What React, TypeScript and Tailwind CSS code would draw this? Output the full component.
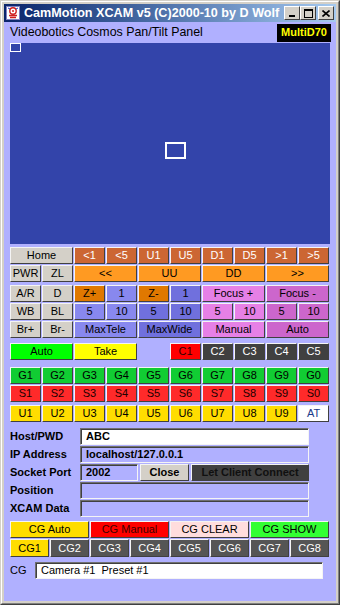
import clsx from 'clsx'

type B = { t: string; c: string; fg?: string; span?: boolean }

const bevel =
  'border border-t-[#f4f4f4] border-l-[#f4f4f4] border-r-[#404040] border-b-[#404040]'

const gray = 'bg-[#d4d0c8]'
const brown = 'bg-[#cc6633]'
const orange = 'bg-[#ff9a22]'
const dkOrange = 'bg-[#e07800]'
const blue1 = 'bg-[#8888ee]'
const blue2 = 'bg-[#7070dd]'
const pink1 = 'bg-[#e680e6]'
const pink2 = 'bg-[#cc66cc]'

const row1: B[] = [
  { t: 'Home', c: gray, span: true },
  ...['<1', '<5', 'U1', 'U5', 'D1', 'D5', '>1', '>5'].map((t) => ({ t, c: brown, fg: 'text-white' })),
]
const row2: B[] = [
  { t: 'PWR', c: gray },
  { t: 'ZL', c: gray },
  { t: '<<', c: orange, span: true },
  { t: 'UU', c: orange, span: true },
  { t: 'DD', c: orange, span: true },
  { t: '>>', c: orange, span: true },
]
const row3: B[] = [
  { t: 'A/R', c: gray },
  { t: 'D', c: gray },
  { t: 'Z+', c: dkOrange },
  { t: '1', c: blue1 },
  { t: 'Z-', c: dkOrange },
  { t: '1', c: blue2 },
  { t: 'Focus +', c: pink1, span: true },
  { t: 'Focus -', c: pink2, span: true },
]
const row4: B[] = [
  { t: 'WB', c: gray },
  { t: 'BL', c: gray },
  { t: '5', c: blue1 },
  { t: '10', c: blue1 },
  { t: '5', c: blue2 },
  { t: '10', c: blue2 },
  { t: '5', c: pink1 },
  { t: '10', c: pink1 },
  { t: '5', c: pink2 },
  { t: '10', c: pink2 },
]
const row5: B[] = [
  { t: 'Br+', c: gray },
  { t: 'Br-', c: gray },
  { t: 'MaxTele', c: blue1, span: true },
  { t: 'MaxWide', c: blue2, span: true },
  { t: 'Manual', c: pink1, span: true },
  { t: 'Auto', c: pink2, span: true },
]

const nums = ['1', '2', '3', '4', '5', '6', '7', '8', '9', '0']

function Btn({ b, h = 'h-[17px]' }: { b: B; h?: string }) {
  return (
    <div
      className={clsx(
        'flex items-center justify-center text-[11px] leading-none',
        bevel,
        h,
        b.c,
        b.fg ?? 'text-black',
        b.span && 'col-span-2',
      )}
    >
      {b.t}
    </div>
  )
}

function Grid({ items, className }: { items: B[]; className?: string }) {
  return (
    <div className={clsx('grid grid-cols-[repeat(10,31px)] gap-px', className)}>
      {items.map((b, i) => (
        <Btn key={i} b={b} />
      ))}
    </div>
  )
}

function Field({ w = 'w-[229px]', white, children }: { w?: string; white?: boolean; children?: React.ReactNode }) {
  return (
    <div
      className={clsx(
        'flex h-[17px] items-center border border-t-[#707070] border-l-[#707070] border-r-[#f4f4f4] border-b-[#f4f4f4] pl-[5px] text-[11px] font-bold leading-none shadow-[inset_1px_1px_0_#404040]',
        w,
        white ? 'bg-white' : 'bg-[#b0b0ff]',
      )}
    >
      {children}
    </div>
  )
}

function TitleBtn({ children }: { children: React.ReactNode }) {
  return (
    <div className="flex h-[14px] w-[16px] items-center justify-center border border-t-white border-l-white border-r-[#404040] border-b-[#404040] bg-[#d4d0c8]">
      {children}
    </div>
  )
}

export default function App() {
  return (
    <div className="h-[605px] w-[340px] border border-t-[#d4d0c8] border-l-[#d4d0c8] border-r-[#404040] border-b-[#404040] font-['Liberation_Sans',Arial,sans-serif]">
      <div className="flex h-full flex-col border border-t-white border-l-white border-r-[#808080] border-b-[#808080] bg-[#d4d0c8] p-[2px]">
        {/* title bar */}
        <div className="flex h-[18px] shrink-0 items-center bg-gradient-to-r from-[#0a246a] to-[#a6caf0] pl-[2px] pr-[2px]">
          <svg width="14" height="14" viewBox="0 0 14 14" className="shrink-0">
            <rect x="0.5" y="0.5" width="13" height="13" fill="#fff" stroke="#8080c0" />
            <circle cx="7" cy="5" r="3.2" fill="none" stroke="#d02020" strokeWidth="1.4" />
            <circle cx="7" cy="5" r="1" fill="#d02020" />
            <path d="M3 9.5h8M4 11.5h6" stroke="#d02020" strokeWidth="1.3" />
            <path d="M2 2l2 1M12 2l-2 1" stroke="#2040c0" strokeWidth="1" />
          </svg>
          <span className="ml-[4px] shrink-0 whitespace-nowrap text-[12.6px] font-bold leading-none text-white">
            CamMotion XCAM v5 (C)2000-10 by D Wolf
          </span>
          <div className="ml-auto flex shrink-0 items-center">
            <TitleBtn>
              <div className="mt-[6px] h-[2px] w-[6px] bg-black" />
            </TitleBtn>
            <TitleBtn>
              <div className="h-[9px] w-[9px] border border-t-2 border-black" />
            </TitleBtn>
            <div className="w-[2px]" />
            <TitleBtn>
              <svg width="8" height="7" viewBox="0 0 8 7">
                <path d="M0.5 0.5l7 6M7.5 0.5l-7 6" stroke="#000" strokeWidth="1.6" />
              </svg>
            </TitleBtn>
          </div>
        </div>

        {/* client */}
        <div className="flex flex-1 flex-col bg-[#b0b0ff] pl-[6px]">
          <div className="flex h-[21px] items-center pr-[5px]">
            <span className="text-[12.4px] leading-none text-black">Videobotics Cosmos Pan/Tilt Panel</span>
            <span className="ml-auto flex h-[18px] w-[54px] items-center justify-center bg-black text-[11px] font-bold text-[#ffff00]">
              MultiD70
            </span>
          </div>

          <div className="relative h-[201px] w-[320px] bg-[#3344aa]">
            <div className="absolute left-0 top-0 h-[9px] w-[11px] border border-white" />
            <div className="absolute left-[155px] top-[99px] h-[17px] w-[21px] border-2 border-white" />
          </div>

          <Grid items={row1} className="mt-[3px]" />
          <Grid items={row2} className="mt-px" />
          <Grid items={[...row3, ...row4, ...row5]} className="mt-[3px]" />

          <div className="mt-[5px] grid grid-cols-[repeat(10,31px)] gap-px">
            <Btn b={{ t: 'Auto', c: 'bg-[#00ff00]', span: true }} />
            <Btn b={{ t: 'Take', c: 'bg-[#ffff00]', span: true }} />
            <div />
            <Btn b={{ t: 'C1', c: 'bg-[#ff0000]', fg: 'text-[#300000]' }} />
            {['C2', 'C3', 'C4', 'C5'].map((t) => (
              <Btn key={t} b={{ t, c: 'bg-[#404040]', fg: 'text-white' }} />
            ))}
          </div>

          <Grid items={nums.map((n) => ({ t: 'G' + n, c: 'bg-[#11cc33]' }))} className="mt-[7px]" />
          <Grid items={nums.map((n) => ({ t: 'S' + n, c: 'bg-[#ff2a2a]', fg: 'text-[#200000]' }))} className="mt-px" />
          <Grid
            items={[
              ...nums.slice(0, 9).map((n) => ({ t: 'U' + n, c: 'bg-[#ffdd00]' })),
              { t: 'AT', c: 'bg-white', fg: 'text-[#1a3a8a]' },
            ]}
            className="mt-[3px]"
          />

          {/* connection form */}
          <div className="mt-[6px] flex flex-col gap-px text-[11px] font-bold text-black">
            <div className="flex h-[17px] items-center">
              <span className="w-[70px]">Host/PWD</span>
              <Field white>ABC</Field>
            </div>
            <div className="flex h-[17px] items-center">
              <span className="w-[70px]">IP Address</span>
              <Field>localhost/127.0.0.1</Field>
            </div>
            <div className="flex h-[17px] items-center">
              <span className="w-[70px]">Socket Port</span>
              <Field w="w-[58px]">2002</Field>
              <div className={clsx('ml-[2px] flex h-[17px] w-[49px] items-center justify-center', bevel, gray)}>Close</div>
              <div className={clsx('ml-[2px] flex h-[17px] w-[118px] items-center justify-center text-[#101010]', bevel, 'bg-[#404040]')}>
                Let Client Connect
              </div>
            </div>
            <div className="flex h-[17px] items-center">
              <span className="w-[70px]">Position</span>
              <Field />
            </div>
            <div className="flex h-[17px] items-center">
              <span className="w-[70px]">XCAM Data</span>
              <Field />
            </div>
          </div>

          <div className="mt-[4px] grid grid-cols-[repeat(4,79px)] gap-px">
            <Btn b={{ t: 'CG Auto', c: 'bg-[#ffdd00]' }} />
            <Btn b={{ t: 'CG Manual', c: 'bg-[#ff0000]', fg: 'text-[#400000]' }} />
            <Btn b={{ t: 'CG CLEAR', c: 'bg-[#ffdddd]' }} />
            <Btn b={{ t: 'CG SHOW', c: 'bg-[#33ff33]' }} />
          </div>
          <div className="mt-px grid grid-cols-[repeat(8,39px)] gap-px">
            {['1', '2', '3', '4', '5', '6', '7', '8'].map((n) => (
              <Btn
                key={n}
                h="h-[18px]"
                b={n === '1' ? { t: 'CG1', c: 'bg-[#ffdd00]' } : { t: 'CG' + n, c: 'bg-[#555555]', fg: 'text-white' }}
              />
            ))}
          </div>

          <div className="mt-[5px] flex h-[17px] items-center">
            <span className="w-[25px] text-[11px] text-black">CG</span>
            <div className="flex h-[17px] w-[288px] items-center border border-t-[#707070] border-l-[#707070] border-r-[#f4f4f4] border-b-[#f4f4f4] bg-white pl-[5px] text-[11px] leading-none shadow-[inset_1px_1px_0_#404040] whitespace-pre">
              Camera #1  Preset #1
            </div>
          </div>
        </div>
      </div>
    </div>
  )
}
